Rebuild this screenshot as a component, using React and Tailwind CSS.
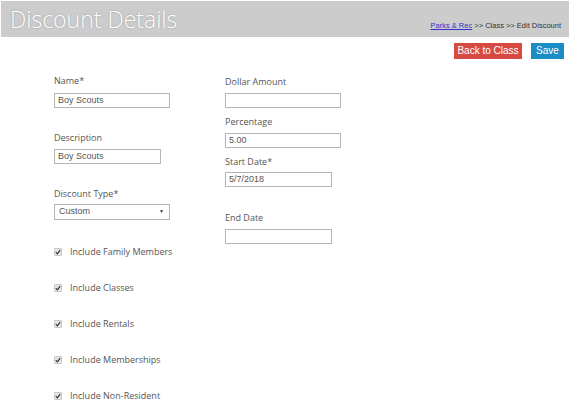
import React from "react";

const labelCls = "h-[14px] leading-[14px] text-[9px] text-[#555] whitespace-nowrap";
const inputCls = "h-[15px] border border-[#b5b5b5] bg-white px-[3px] text-[9px] leading-[13px] text-[#555]";
const seg = { fontFamily: '"Open Sans", "Noto Sans", sans-serif' };
const arial = { fontFamily: '"Liberation Sans", Arial, sans-serif' };

function Check({ label }) {
  return (
    <div className="flex h-[14px] items-center whitespace-nowrap">
      <span className="flex h-[8px] w-[8px] items-center justify-center rounded-[1px] border border-[#c8c8c8] bg-[#e6e6e6]">
        <svg width="6" height="6" viewBox="0 0 6 6">
          <path d="M0.8 3.2 L2.4 4.8 L5.2 1.2" stroke="#333" strokeWidth="1.2" fill="none" />
        </svg>
      </span>
      <span className="ml-[8px] text-[9px] text-[#555]" style={seg}>{label}</span>
    </div>
  );
}

export default function App() {
  return (
    <div className="h-[413px] w-[570px] overflow-hidden bg-white pt-px" style={seg}>
      <div className="mx-px flex h-[36px] items-start justify-between bg-[#cccccc]">
        <div
          className="ml-[9px] mt-[3px] whitespace-nowrap text-[23px] leading-[30px] text-white"
          style={{ ...seg, textShadow: "0 0 2px rgba(0,0,0,0.25)", fontWeight: 300 }}
        >
          Discount Details
        </div>
        <div className="mr-[8px] mt-[19px] whitespace-nowrap text-[7.5px] text-[#333]" style={arial}>
          <span className="text-[#3333cc] underline">Parks &amp; Rec</span>
          <span> &gt;&gt; Class &gt;&gt; Edit Discount</span>
        </div>
      </div>
      <div className="mr-[6px] mt-[6px] flex justify-end gap-[9px]" style={arial}>
        <button className="h-[16px] w-[68px] bg-[#d54b43] text-[10px] leading-[16px] text-white">
          Back to Class
        </button>
        <button className="h-[16px] w-[33px] bg-[#1a8dc5] text-[10px] leading-[16px] text-white">
          Save
        </button>
      </div>
      <div className="mt-[15px] flex">
        <div className="ml-[54px] flex w-[116px] flex-col">
          <div className={labelCls}>Name*</div>
          <div className={`${inputCls} mt-[5px] w-[116px]`} style={arial}>Boy Scouts</div>
          <div className={`${labelCls} mt-[23px]`}>Description</div>
          <div className={`${inputCls} mt-[4px] w-[107px]`} style={arial}>Boy Scouts</div>
          <div className={`${labelCls} mt-[23px]`}>Discount Type*</div>
          <div
            className="mt-[3px] flex h-[16px] w-[116px] items-center justify-between border border-[#b5b5b5] bg-white pl-[4px] pr-[5px] text-[9px] text-[#555]"
            style={arial}
          >
            <span>Custom</span>
            <span className="text-[5px] text-[#333]">▼</span>
          </div>
          <div className="mt-[25px] flex flex-col gap-[22px]">
            <Check label="Include Family Members" />
            <Check label="Include Classes" />
            <Check label="Include Rentals" />
            <Check label="Include Memberships" />
            <Check label="Include Non-Resident" />
          </div>
        </div>
        <div className="ml-[55px] flex flex-col">
          <div className={`${labelCls} mt-px`}>Dollar Amount</div>
          <div className={`${inputCls} mt-[4px] w-[116px]`} style={arial}></div>
          <div className={`${labelCls} mt-[7px]`}>Percentage</div>
          <div className={`${inputCls} mt-[4px] w-[116px]`} style={arial}>5.00</div>
          <div className={`${labelCls} mt-[7px]`}>Start Date*</div>
          <div className={`${inputCls} mt-[3px] w-[107px]`} style={arial}>5/7/2018</div>
          <div className={`${labelCls} mt-[24px]`}>End Date</div>
          <div className={`${inputCls} mt-[4px] w-[107px]`} style={arial}></div>
        </div>
      </div>
    </div>
  );
}
